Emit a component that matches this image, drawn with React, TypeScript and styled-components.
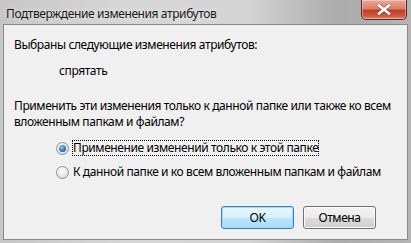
import React from "react";
import styled, { createGlobalStyle } from "styled-components";

const Global = createGlobalStyle`
  html, body { margin: 0; padding: 0; background: #9c9c9c; }
  body { font-family: "Noto Sans", "Open Sans", sans-serif; }
`;

const Window = styled.div`
  width: 411px;
  height: 243px;
  display: flex;
  flex-direction: column;
  background: linear-gradient(90deg, #c6c6c6 0%, #d6d6d6 30%, #d4d4d4 60%, #acacac 82%, #b4b4b4 100%);
  box-sizing: border-box;
`;

const TitleBar = styled.div`
  height: 24px;
  display: flex;
  align-items: flex-start;
  justify-content: space-between;
  padding: 0 4px 0 6px;
  box-sizing: border-box;
`;

const Title = styled.div`
  font-size: 12px;
  letter-spacing: -0.4px;
  color: #1a1a1a;
  line-height: 16px;
  margin-top: 6px;
  text-shadow: 0 0 6px rgba(255,255,255,0.8);
`;

const Close = styled.div`
  width: 46px;
  height: 20px;
  box-sizing: border-box;
  border: 1px solid #5a2a22;
  border-top: none;
  border-radius: 0 0 5px 5px;
  background: linear-gradient(180deg, #eaa999 0%, #da7f6a 45%, #c23c26 55%, #cc5a40 85%, #e48c72 100%);
  box-shadow: inset 0 0 0 1px rgba(255,255,255,0.35);
  display: flex;
  align-items: center;
  justify-content: center;
`;

const Body = styled.div`
  flex: 1;
  margin: 0 3px 3px 3px;
  border: 1px solid #8a8a8a;
  background: #f0f0f0;
  display: flex;
  flex-direction: column;
  padding: 12px 10px 0 10px;
  font-size: 12px;
  letter-spacing: -0.4px;
  line-height: 16px;
  color: #000;
`;

const Line = styled.div<{ $indent?: number; $top?: number }>`
  margin-left: ${(p) => p.$indent ?? 0}px;
  margin-top: ${(p) => p.$top ?? 0}px;
  white-space: nowrap;
`;

const RadioRow = styled.label<{ $top?: number }>`
  display: flex;
  align-items: center;
  margin-left: 42px;
  height: 16px;
  margin-top: ${(p) => p.$top ?? 8}px;
  white-space: nowrap;
`;

const RadioCircle = styled.span<{ $checked?: boolean }>`
  width: 13px;
  height: 13px;
  box-sizing: border-box;
  border-radius: 50%;
  border: 1px solid #8e8f8f;
  background: radial-gradient(circle at 40% 35%, #ffffff 0%, #e6e6e6 60%, #cfcfcf 100%);
  margin-right: 3px;
  display: flex;
  align-items: center;
  justify-content: center;
  &::after {
    content: "";
    display: ${(p) => (p.$checked ? "block" : "none")};
    width: 7px;
    height: 7px;
    border-radius: 50%;
    background: radial-gradient(circle at 40% 35%, #8ad0f8 0%, #2a78c0 55%, #0e3f78 100%);
  }
`;

const Label = styled.span<{ $focus?: boolean }>`
  padding: 0 1px;
  outline: ${(p) => (p.$focus ? "1px dotted #000" : "none")};
  outline-offset: -1px;
`;

const ButtonRow = styled.div`
  display: flex;
  justify-content: flex-end;
  gap: 9px;
  margin-top: auto;
  margin-bottom: 10px;
  padding-right: 21px;
`;

const Button = styled.div<{ $primary?: boolean }>`
  width: 73px;
  height: 23px;
  box-sizing: border-box;
  border-radius: 3px;
  border: 1px solid ${(p) => (p.$primary ? "#3c7fb1" : "#707070")};
  background: ${(p) =>
    p.$primary
      ? "linear-gradient(180deg, #eaf6fd 0%, #d9f0fc 50%, #bee6fd 51%, #a7d9f5 100%)"
      : "linear-gradient(180deg, #f2f2f2 0%, #ebebeb 50%, #dddddd 51%, #cfcfcf 100%)"};
  box-shadow: inset 0 0 0 1px ${(p) => (p.$primary ? "#9fdcf8" : "#fcfcfc")};
  display: flex;
  align-items: center;
  justify-content: center;
  font-size: 12px;
  color: #000;
`;

export default function App() {
  return (
    <>
      <Global />
      <Window>
        <TitleBar>
          <Title>Подтверждение изменения атрибутов</Title>
          <Close>
            <svg width="14" height="11" viewBox="0 0 14 11">
              <path d="M2 1.5 L12 9.5 M12 1.5 L2 9.5" stroke="#5a2a22" strokeWidth="4" strokeLinecap="square" opacity="0.5" />
              <path d="M2 1.5 L12 9.5 M12 1.5 L2 9.5" stroke="#ffffff" strokeWidth="2.6" strokeLinecap="square" />
            </svg>
          </Close>
        </TitleBar>
        <Body>
          <Line>Выбраны следующие изменения атрибутов:</Line>
          <Line $indent={45} $top={10}>спрятать</Line>
          <Line $top={19}>Применить эти изменения только к данной папке или также ко всем</Line>
          <Line>вложенным папкам и файлам?</Line>
          <RadioRow $top={10}>
            <RadioCircle $checked />
            <Label $focus>Применение изменений только к этой папке</Label>
          </RadioRow>
          <RadioRow>
            <RadioCircle />
            <Label>К данной папке и ко всем вложенным папкам и файлам</Label>
          </RadioRow>
          <ButtonRow>
            <Button $primary>OK</Button>
            <Button>Отмена</Button>
          </ButtonRow>
        </Body>
      </Window>
    </>
  );
}
